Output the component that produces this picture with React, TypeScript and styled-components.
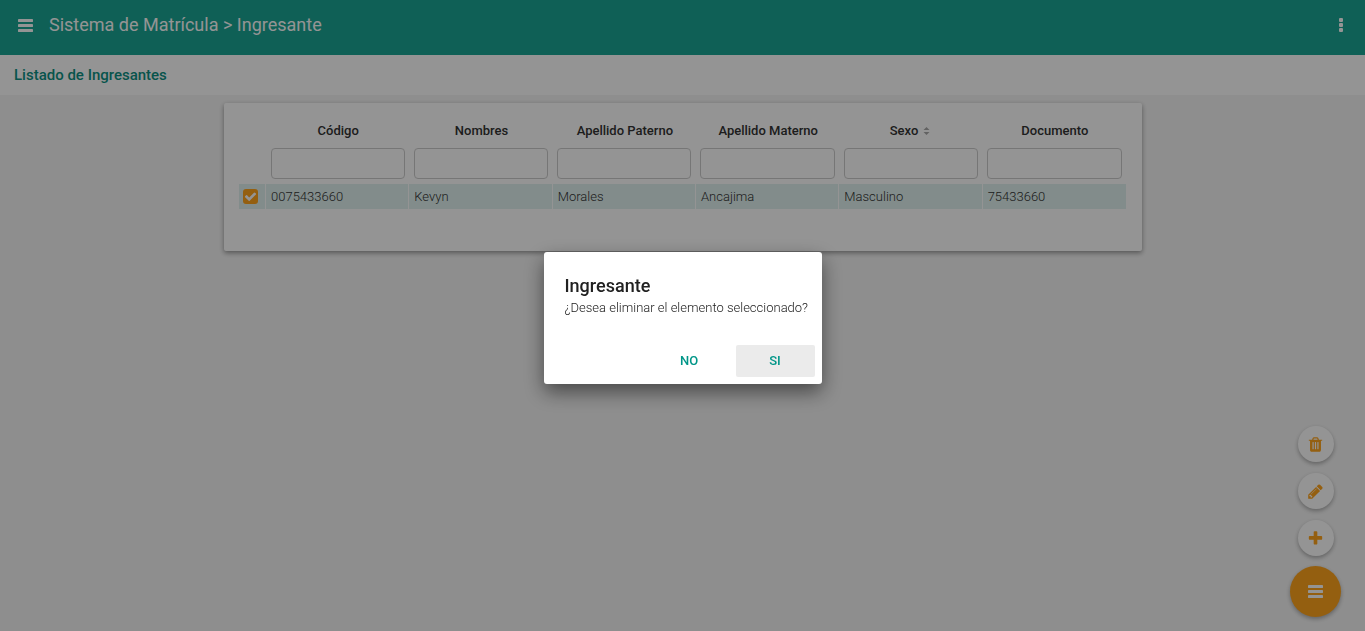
import React from "react";
import styled, { createGlobalStyle } from "styled-components";

const TEAL = "#1aa594";
const ORANGE = "#ffa41c";

const GlobalStyle = createGlobalStyle`
  * { box-sizing: border-box; }
  body {
    margin: 0;
    min-height: 100vh;
    background: #f5f5f5;
    color: #333;
    font: 300 13px/20px Roboto, "Liberation Sans", sans-serif;
  }
  button, input { font: inherit; color: inherit; }
`;

const TopBar = styled.header`
  display: flex;
  align-items: center;
  height: 55px;
  padding: 0 15px 5px 16px;
  background: ${TEAL};
  color: #fff;
`;

const PageTitle = styled.h1`
  flex: 1;
  margin: 0 0 0 15px;
  font-size: 18px;
  font-weight: 400;
  line-height: 24px;
`;

const IconButton = styled.button`
  display: flex;
  align-items: center;
  justify-content: center;
  padding: 0;
  width: 18px;
  height: 24px;
  border: 0;
  background: none;
`;

const SubBar = styled.div`
  display: flex;
  align-items: center;
  height: 40px;
  padding: 0 14px;
  background: #fff;
`;

const SubTitle = styled.h2`
  margin: 0;
  font-size: 15px;
  font-weight: 500;
  line-height: 20px;
  color: #0d9184;
`;

const Card = styled.main`
  width: calc(100% - 32px);
  max-width: 918px;
  margin: 8px auto 0;
  padding: 12px 16px 42px 15px;
  background: #fff;
  border-radius: 2px;
  box-shadow: 0 2px 5px rgba(0, 0, 0, 0.4);
`;

const Table = styled.table`
  width: 100%;
  table-layout: fixed;
  border-collapse: collapse;
`;

const CheckColumn = styled.col`
  width: 27px;
`;

const HeadCell = styled.th`
  height: 31px;
  padding: 0 3px 0 5px;
  font-weight: 500;
  color: #333;
`;

const SortButton = styled.button`
  display: inline-flex;
  align-items: center;
  gap: 5px;
  padding: 0 3px 0 0;
  border: 0;
  background: none;
  font-weight: 500;
`;

const FilterCell = styled.td`
  padding: 2px 4px 5px 5px;
`;

const FilterInput = styled.input`
  display: block;
  width: 100%;
  height: 31px;
  padding: 4px 8px;
  border: 1px solid #ccc;
  border-radius: 4px;
  background: transparent;
  outline: 0;
`;

const Cell = styled.td`
  height: 25px;
  padding: 0 4px 0 5px;
  border-right: 1px solid #fff;
  background: #e0f2ef;
  background-clip: padding-box;
  &:first-child { padding-left: 4px; }
  &:last-child { border-right: 0; }
`;

const CheckLabel = styled.label`
  display: grid;
  width: 15px;
  height: 15px;
  place-items: center;
  border-radius: 3px;
  background: ${ORANGE};
  color: #fff;
  > * { grid-area: 1 / 1; }
`;

const CheckInput = styled.input`
  appearance: none;
  width: 15px;
  height: 15px;
  margin: 0;
`;

const Actions = styled.nav`
  position: fixed;
  right: 24px;
  bottom: 14px;
  display: flex;
  flex-direction: column;
  align-items: center;
  gap: 10px;
`;

const SecondaryActions = styled.div`
  display: flex;
  flex-direction: column;
  gap: 11px;
`;

const RoundButton = styled.button<{ $primary?: boolean }>`
  display: flex;
  align-items: center;
  justify-content: center;
  width: ${(p) => (p.$primary ? 51 : 36)}px;
  height: ${(p) => (p.$primary ? 51 : 36)}px;
  padding: 0;
  border: 0;
  border-radius: 50%;
  background: ${(p) => (p.$primary ? ORANGE : "#fff")};
  color: ${(p) => (p.$primary ? "#fff" : ORANGE)};
  box-shadow: 0 2px 4px rgba(0, 0, 0, 0.3);
`;

const Backdrop = styled.div`
  position: fixed;
  inset: 0;
  display: flex;
  align-items: center;
  justify-content: center;
  padding-top: 5px;
  background: rgba(0, 0, 0, 0.42);
`;

const Dialog = styled.section`
  width: 278px;
  background: #fff;
  color: #212121;
  border-radius: 3px;
  box-shadow: 0 8px 20px rgba(0, 0, 0, 0.5);
`;

const DialogBody = styled.div`
  padding: 22px 12px 27px 21px;
`;

const DialogTitle = styled.h2`
  margin: 0;
  font-size: 18px;
  font-weight: 500;
  line-height: 24px;
`;

const DialogText = styled.p`
  margin: 0;
`;

const DialogActions = styled.div`
  display: flex;
  justify-content: flex-end;
  gap: 7px;
  padding: 0 7px 7px;
`;

const FlatButton = styled.button<{ $active?: boolean }>`
  width: 79px;
  height: 32px;
  padding: 0;
  border: 0;
  border-radius: 2px;
  background: ${(p) => (p.$active ? "#ebebeb" : "transparent")};
  color: #009688;
  font-weight: 500;
`;

const paths = {
  trash:
    "M704 1376v-704q0-14-9-23t-23-9h-64q-14 0-23 9t-9 23v704q0 14 9 23t23 9h64q14 0 23-9t9-23zm256 0v-704q0-14-9-23t-23-9h-64q-14 0-23 9t-9 23v704q0 14 9 23t23 9h64q14 0 23-9t9-23zm256 0v-704q0-14-9-23t-23-9h-64q-14 0-23 9t-9 23v704q0 14 9 23t23 9h64q14 0 23-9t9-23zm-544-992h448l-48-117q-7-9-17-11h-317q-10 2-17 11zm928 32v64q0 14-9 23t-23 9h-96v948q0 83-47 143.5t-113 60.5h-832q-66 0-113-58.5t-47-141.5v-952h-96q-14 0-23-9t-9-23v-64q0-14 9-23t23-9h309l70-167q15-37 54-63t79-26h320q40 0 79 26t54 63l70 167h309q14 0 23 9t9 23z",
  pencil:
    "M491 1536l91-91-235-235-91 91v107h128v128h107zm523-928q0-22-22-22-10 0-17 7l-542 542q-7 7-7 17 0 22 22 22 10 0 17-7l542-542q7-7 7-17zm-54-192l416 416-832 832h-416v-416zm683 96q0 53-37 90l-166 166-416-416 166-165q36-38 90-38 53 0 91 38l235 234q37 39 37 91z",
  plus: "M1600 736v192q0 40-28 68t-68 28h-416v416q0 40-28 68t-68 28h-192q-40 0-68-28t-28-68v-416h-416q-40 0-68-28t-28-68v-192q0-40 28-68t68-28h416v-416q0-40 28-68t68-28h192q40 0 68 28t28 68v416h416q40 0 68 28t28 68z",
  check:
    "M1671 566q0 40-28 68l-724 724-136 136q-28 28-68 28t-68-28l-136-136-362-362q-28-28-28-68t28-68l136-136q28-28 68-28t68 28l294 295 656-657q28-28 68-28t68 28l136 136q28 28 28 68z",
};

const Glyph = ({ name, size }: { name: keyof typeof paths; size: number }) => (
  <svg width={size} height={size} viewBox="0 0 1792 1792" fill="currentColor" aria-hidden="true">
    <path d={paths[name]} />
  </svg>
);

const BarsIcon = () => (
  <svg width="15" height="13" viewBox="0 0 15 13" fill="#fff" aria-hidden="true">
    <rect y="0" width="15" height="2.9" rx=".4" />
    <rect y="5" width="15" height="2.9" rx=".4" />
    <rect y="10" width="15" height="2.9" rx=".4" />
  </svg>
);

const DotsIcon = () => (
  <svg width="4" height="14" viewBox="0 0 4 14" fill="#fff" aria-hidden="true">
    <rect width="4" height="4" rx="1" />
    <rect y="5" width="4" height="4" rx="1" />
    <rect y="10" width="4" height="4" rx="1" />
  </svg>
);

const SortIcon = () => (
  <svg width="7" height="8" viewBox="0 0 7 8" fill="#aaa" aria-hidden="true">
    <path d="M3.5 0L6.5 3H.5zM3.5 8L6.5 5H.5z" />
  </svg>
);

const columns = [
  { title: "Código", value: "0075433660" },
  { title: "Nombres", value: "Kevyn" },
  { title: "Apellido Paterno", value: "Morales" },
  { title: "Apellido Materno", value: "Ancajima" },
  { title: "Sexo", value: "Masculino", sortable: true },
  { title: "Documento", value: "75433660" },
];

export default function App() {
  return (
    <>
      <GlobalStyle />
      <TopBar>
        <IconButton aria-label="Menú"><BarsIcon /></IconButton>
        <PageTitle>Sistema de Matrícula &gt; Ingresante</PageTitle>
        <IconButton aria-label="Más opciones"><DotsIcon /></IconButton>
      </TopBar>
      <SubBar>
        <SubTitle>Listado de Ingresantes</SubTitle>
      </SubBar>
      <Card>
        <Table>
          <colgroup>
            <CheckColumn />
            {columns.map((c) => <col key={c.title} />)}
          </colgroup>
          <thead>
            <tr>
              <td />
              {columns.map((c) => (
                <HeadCell key={c.title} scope="col">
                  {c.sortable ? <SortButton>{c.title}<SortIcon /></SortButton> : c.title}
                </HeadCell>
              ))}
            </tr>
            <tr>
              <td />
              {columns.map((c) => (
                <FilterCell key={c.title}><FilterInput type="text" aria-label={c.title} /></FilterCell>
              ))}
            </tr>
          </thead>
          <tbody>
            <tr>
              <Cell>
                <CheckLabel>
                  <CheckInput type="checkbox" defaultChecked aria-label="Seleccionar Kevyn Morales" />
                  <Glyph name="check" size={13} />
                </CheckLabel>
              </Cell>
              {columns.map((c) => <Cell key={c.title}>{c.value}</Cell>)}
            </tr>
          </tbody>
        </Table>
      </Card>
      <Actions aria-label="Acciones">
        <SecondaryActions>
          <RoundButton aria-label="Eliminar"><Glyph name="trash" size={17} /></RoundButton>
          <RoundButton aria-label="Editar"><Glyph name="pencil" size={17} /></RoundButton>
          <RoundButton aria-label="Agregar"><Glyph name="plus" size={17} /></RoundButton>
        </SecondaryActions>
        <RoundButton $primary aria-label="Acciones"><BarsIcon /></RoundButton>
      </Actions>
      <Backdrop>
        <Dialog role="dialog" aria-modal="true" aria-labelledby="dialog-title">
          <DialogBody>
            <DialogTitle id="dialog-title">Ingresante</DialogTitle>
            <DialogText>¿Desea eliminar el elemento seleccionado?</DialogText>
          </DialogBody>
          <DialogActions>
            <FlatButton>NO</FlatButton>
            <FlatButton $active>SI</FlatButton>
          </DialogActions>
        </Dialog>
      </Backdrop>
    </>
  );
}
